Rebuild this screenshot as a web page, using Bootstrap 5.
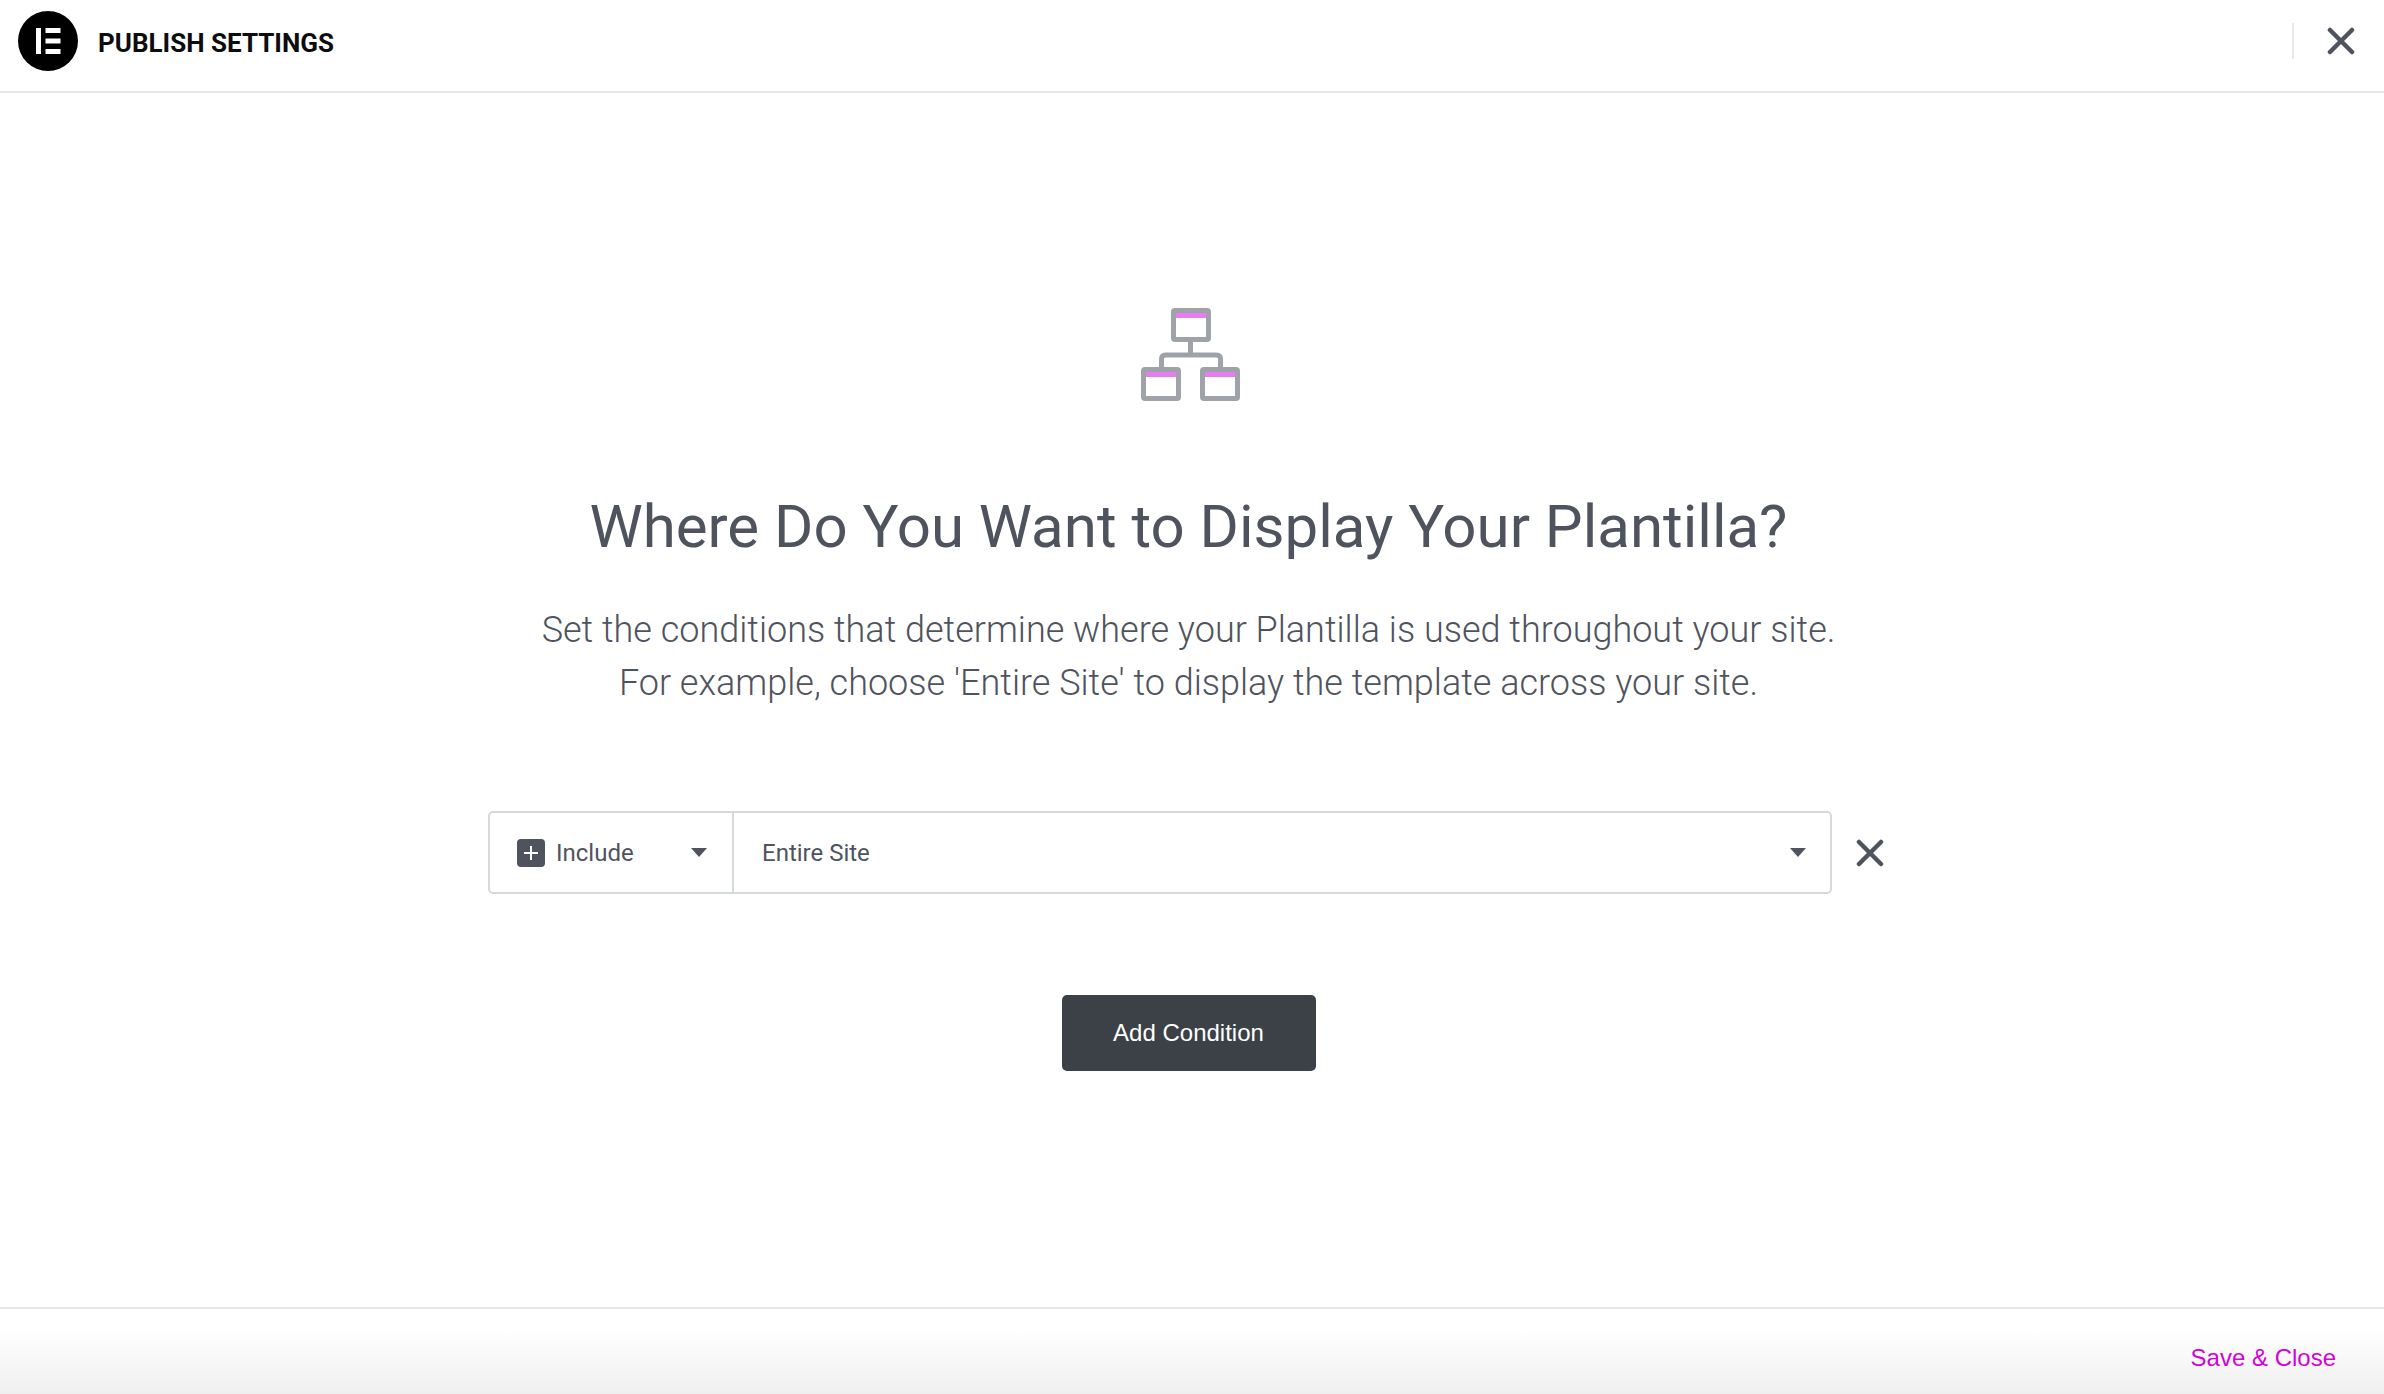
<!DOCTYPE html>
<html lang="en">
<head>
  <meta charset="UTF-8" />
  <meta name="viewport" content="width=device-width, initial-scale=1.0" />
  <title>Publish Settings</title>
  <link href="https://cdn.jsdelivr.net/npm/bootstrap@5.3.0/dist/css/bootstrap.min.css" rel="stylesheet" crossorigin="anonymous" />
  <style>
    html, body { height: 100%; }
    body { font-family: Roboto, "Liberation Sans", sans-serif; color: #4f535e; background: #fff; }
    .page-wrap { height: 1394px; }
    .top-bar { height: 93px; border-bottom: 2px solid #e6e9ec; padding: 0 29px 9px 18px; }
    .logo-dot { width: 60px; height: 60px; }
    .top-title { font-size: 26px; font-weight: 700; color: #0c0d0e; margin: 5px 0 0 20px; }
    .top-sep { width: 2px; height: 36px; background: #e6e9ec; margin-right: 33px; }
    .main-area { padding: 215px 7px 0 0; }
    .main-icon { width: 102px; height: 93px; padding-left: 3px; }
    .main-title { font-size: 60px; font-weight: 400; color: #4f535e; margin: 91px 0 0; line-height: 70px; }
    .main-text { font-size: 36px; font-weight: 300; line-height: 53px; margin: 42px 0 0; color: #4f535e; }
    .cond-row { margin-top: 101px; margin-left: 488px; }
    .cond-box { width: 1344px; height: 83px; border: 2px solid #d5d8dc; border-radius: 5px; font-size: 24px; }
    .cond-type { width: 244px; border-right: 2px solid #d5d8dc; padding: 0 25px 0 27px; }
    .cond-value { padding: 0 24px 0 28px; }
    .plus-box { width: 28px; height: 28px; background: #4f535e; border-radius: 4px; margin-right: 11px; }
    .caret-down { width: 0; height: 0; border-left: 8px solid transparent; border-right: 8px solid transparent; border-top: 9px solid #4f535e; }
    .cond-remove { margin-left: 24px; }
    .add-btn { width: 254px; height: 76px; margin-top: 101px; background: #3c4047; border: 0; border-radius: 5px; color: #fff; font-family: "Liberation Sans", sans-serif; font-size: 24px; }
    .bottom-bar { height: 87px; border-top: 2px solid #e6e9ec; background: linear-gradient(#fff 25%, #efefef); padding-right: 48px; padding-top: 35px; }
    .save-link { font-family: "Liberation Sans", sans-serif; font-size: 24px; line-height: 28px; color: #d004d4; text-decoration: none; }
  </style>
</head>
<body>
  <div class="page-wrap d-flex flex-column">
    <header class="top-bar d-flex align-items-center flex-shrink-0">
      <svg class="logo-dot" viewBox="0 0 60 60" aria-hidden="true">
        <circle cx="30" cy="30" r="30" fill="#000" />
        <rect x="18" y="17" width="5" height="26" fill="#fff" />
        <rect x="27.500" y="17" width="15" height="5" fill="#fff" />
        <rect x="27.500" y="27.500" width="15" height="5" fill="#fff" />
        <rect x="27.500" y="38" width="15" height="5" fill="#fff" />
      </svg>
      <span class="top-title">PUBLISH SETTINGS</span>
      <span class="top-sep ms-auto"></span>
      <svg width="28" height="28" viewBox="0 0 28 28" aria-hidden="true"><path d="M3 3 L25 25 M25 3 L3 25" stroke="#4f535e" stroke-width="4.500" stroke-linecap="round" /></svg>
    </header>

    <main class="main-area flex-grow-1 text-center">
      <svg class="main-icon d-block mx-auto" viewBox="0 0 99 93" aria-hidden="true">
        <path d="M49.500 32 V47 M20.500 60 V51 Q20.500 47 24.500 47 H75.500 Q79.500 47 79.500 51 V60" fill="none" stroke="#9fa3a9" stroke-width="5" />
        <g fill="#fff" stroke="#9fa3a9" stroke-width="5" stroke-linejoin="round">
          <rect x="32.500" y="2.500" width="35" height="29" rx="1.500" />
          <rect x="2.500" y="61.500" width="35" height="29" rx="1.500" />
          <rect x="61.500" y="61.500" width="35" height="29" rx="1.500" />
        </g>
        <g fill="#e87df0">
          <rect x="35" y="5" width="30" height="5" />
          <rect x="5" y="64" width="30" height="5" />
          <rect x="64" y="64" width="30" height="5" />
        </g>
      </svg>
      <h1 class="main-title">Where Do You Want to Display Your Plantilla?</h1>
      <p class="main-text">Set the conditions that determine where your Plantilla is used throughout your site.<br />For example, choose 'Entire Site' to display the template across your site.</p>

      <div class="cond-row d-flex align-items-center">
        <div class="cond-box d-flex">
          <div class="cond-type d-flex align-items-center">
            <span class="plus-box d-flex align-items-center justify-content-center">
              <svg width="16" height="16" viewBox="0 0 16 16" aria-hidden="true"><path d="M8 1 V15 M1 8 H15" stroke="#fff" stroke-width="2" /></svg>
            </span>
            <span>Include</span>
            <span class="caret-down ms-auto"></span>
          </div>
          <div class="cond-value d-flex align-items-center flex-grow-1">
            <span>Entire Site</span>
            <span class="caret-down ms-auto"></span>
          </div>
        </div>
        <svg class="cond-remove" width="28" height="28" viewBox="0 0 28 28" aria-hidden="true"><path d="M3 3 L25 25 M25 3 L3 25" stroke="#4f535e" stroke-width="4.500" stroke-linecap="round" /></svg>
      </div>

      <button type="button" class="add-btn btn">Add Condition</button>
    </main>

    <footer class="bottom-bar d-flex justify-content-end flex-shrink-0">
      <a href="#" class="save-link">Save &amp; Close</a>
    </footer>
  </div>
  <script src="https://cdn.jsdelivr.net/npm/bootstrap@5.3.0/dist/js/bootstrap.bundle.min.js" crossorigin="anonymous"></script>
</body>
</html>
